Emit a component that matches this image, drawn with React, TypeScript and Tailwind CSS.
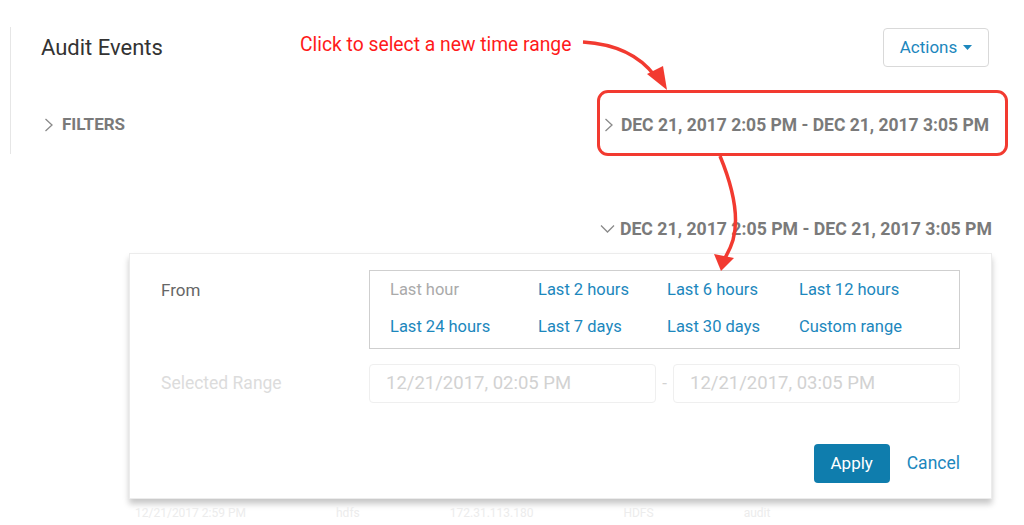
const RANGES = [
  { label: 'Last hour', active: true },
  { label: 'Last 2 hours' },
  { label: 'Last 6 hours' },
  { label: 'Last 12 hours' },
  { label: 'Last 24 hours' },
  { label: 'Last 7 days' },
  { label: 'Last 30 days' },
  { label: 'Custom range' },
]

const RANGE_TEXT = 'DEC 21, 2017 2:05 PM - DEC 21, 2017 3:05 PM'

function Chevron({ open }: { open?: boolean }) {
  if (open) {
    return (
      <svg width="15" height="10" viewBox="0 0 15 10" className="shrink-0">
        <polyline points="1,1.5 7.5,8 14,1.5" fill="none" stroke="#8a8a8a" strokeWidth="1.3" />
      </svg>
    )
  }
  return (
    <svg width="10" height="14" viewBox="0 0 10 14" className="shrink-0">
      <polyline points="1.5,1 8,7 1.5,13" fill="none" stroke="#8a8a8a" strokeWidth="1.3" />
    </svg>
  )
}

export default function App() {
  return (
    <div className="relative w-[1024px] h-[525px] overflow-hidden bg-white font-['Roboto',sans-serif]">
      {/* ── Page header ── */}
      <div className="pt-[27px]">
        <div className="ml-[10px] h-[127px] border-l border-[#e6e6e6] pl-[30px] pr-[35px]">
          <div className="flex h-[40px] items-center justify-between">
            <h1 className="mt-[2px] text-[22px] leading-none text-[#333]">Audit Events</h1>
            <button className="flex h-[39px] w-[106px] items-center justify-center gap-[6px] rounded-[4px] border border-[#d9d9d9] pt-[1px] text-[17px] text-[#1c87bd]">
              Actions
              <svg width="9" height="5" viewBox="0 0 9 5">
                <polygon points="0,0 9,0 4.5,5" fill="#1c87bd" />
              </svg>
            </button>
          </div>
          <div className="mt-[45px] flex items-center justify-between">
            <div className="flex items-center gap-[8px] pl-[3px]">
              <Chevron />
              <span className="text-[17px] font-bold text-[#7a7a7a]">FILTERS</span>
            </div>
            <div className="flex items-center gap-[7px]">
              <Chevron />
              <span className="text-[17.5px] font-bold text-[#7a7a7a]">{RANGE_TEXT}</span>
            </div>
          </div>
        </div>
      </div>

      {/* ── Expanded range picker ── */}
      <div className="mt-[62px] flex justify-end pr-[32px]">
        <div className="flex items-center gap-[5px]">
          <Chevron open />
          <span className="text-[17.7px] font-bold text-[#7a7a7a]">{RANGE_TEXT}</span>
        </div>
      </div>

      <div className="ml-[129px] mr-[32px] mt-[10px] border border-[#ececec] bg-white px-[31px] pt-[16px] pb-[15px] shadow-[0_5px_6px_rgba(0,0,0,0.22)]">
        <div className="flex">
          <div className="w-[208px] pt-[8px] text-[17px] text-[#666]">From</div>
          <div className="grid flex-1 grid-cols-[148px_129px_132px_1fr] gap-y-[13px] border border-[#cfcfcf] pl-[20px] pt-[7px] pb-[8px]">
            {RANGES.map((r) => (
              <span key={r.label} className={r.active ? 'text-[16.5px] text-[#aaa]' : 'text-[16.5px] text-[#1c87bd]'}>
                {r.label}
              </span>
            ))}
          </div>
        </div>

        <div className="mt-[15px] flex items-center">
          <div className="w-[208px] text-[17.5px] text-[#dcdcdc]">Selected Range</div>
          <div className="flex flex-1 items-center">
            <div className="flex h-[39px] flex-1 items-center rounded-[4px] border border-[#efefef] px-[16px] text-[18.5px] text-[#d2d2d2]">
              12/21/2017, 02:05 PM
            </div>
            <span className="w-[17px] text-center text-[17px] text-[#d2d2d2]">-</span>
            <div className="flex h-[39px] flex-1 items-center rounded-[4px] border border-[#efefef] px-[16px] text-[18.5px] text-[#d2d2d2]">
              12/21/2017, 03:05 PM
            </div>
          </div>
        </div>

        <div className="mt-[41px] flex items-center justify-end gap-[17px]">
          <button className="h-[39px] w-[76px] rounded-[4px] bg-[#0f7dad] text-[17px] text-white">Apply</button>
          <button className="text-[17.5px] text-[#1c87bd]">Cancel</button>
        </div>
      </div>

      {/* faint table row behind the popover */}
      <div className="mt-[5px] flex gap-[90px] pl-[135px] text-[12px] text-[#ececec]">
        <span>12/21/2017 2:59 PM</span>
        <span>hdfs</span>
        <span>172.31.113.180</span>
        <span>HDFS</span>
        <span>audit</span>
      </div>

      {/* ── Annotations ── */}
      <span className="absolute left-[300px] top-[31px] text-[19.3px] text-[#ff1a1a]">Click to select a new time range</span>
      <div className="absolute left-[597px] top-[90px] h-[66px] w-[411px] rounded-[11px] border-[3px] border-[#f23a30]" />
      <svg className="absolute left-0 top-0" width="1024" height="525" viewBox="0 0 1024 525">
        <path d="M583 42 C 615 44, 640 56, 655 76" fill="none" stroke="#f23a30" strokeWidth="3.5" />
        <polygon points="647,74 667,90 663,66" fill="#f23a30" />
        <path d="M720 156 C 732 185, 740 215, 733 240 C 730 250, 727 254, 725 258" fill="none" stroke="#f23a30" strokeWidth="3.5" />
        <polygon points="714,254 721,271 734,258" fill="#f23a30" />
      </svg>
    </div>
  )
}
